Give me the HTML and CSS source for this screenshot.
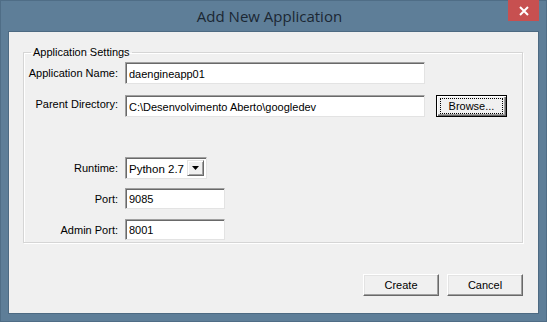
FILE: index.html
```html
<!DOCTYPE html>
<html lang="en">
<head>
<meta charset="UTF-8">
<title>Add New Application</title>
<link rel="stylesheet" href="styles.css">
</head>
<body>
<div class="window">
  <div class="titlebar">
    <span class="title">Add New Application</span>
    <button class="close" type="button">
      <svg width="10" height="10" viewBox="0 0 10 10"><path d="M1 1L9 9M9 1L1 9" stroke="#fff" stroke-width="2"/></svg>
    </button>
  </div>
  <div class="client">
    <fieldset class="group">
      <legend>Application Settings</legend>
      <div class="row row-name">
        <label>Application Name:</label>
        <input class="field wide" type="text" value="daengineapp01">
      </div>
      <div class="row row-dir">
        <label class="up">Parent Directory:</label>
        <input class="field wide" type="text" value="C:\Desenvolvimento Aberto\googledev">
        <button class="btn default" type="button"><span class="focus">Browse...</span></button>
      </div>
      <div class="row row-runtime">
        <label>Runtime:</label>
        <div class="combo">
          <span class="combo-text">Python 2.7</span>
          <span class="combo-btn"><svg width="7" height="4" viewBox="0 0 7 4"><path d="M0 0H7L3.5 4Z" fill="#000"/></svg></span>
        </div>
      </div>
      <div class="row row-port">
        <label>Port:</label>
        <input class="field short" type="text" value="9085">
      </div>
      <div class="row row-admin">
        <label>Admin Port:</label>
        <input class="field short" type="text" value="8001">
      </div>
    </fieldset>
    <div class="actions">
      <button class="btn" type="button">Create</button>
      <button class="btn" type="button">Cancel</button>
    </div>
  </div>
</div>
</body>
</html>
```

FILE: styles.css
```css
body {
  margin: 0;
  padding: 0;
  font-family: "Liberation Sans", Arial, sans-serif;
  font-size: 11px;
  color: #000;
}

.window {
  width: 547px;
  height: 322px;
  background-color: #5e7e98;
  box-sizing: border-box;
  border: 1px solid #4f6d86;
}

.titlebar {
  position: relative;
  height: 30px;
  text-align: center;
}

.title {
  display: inline-block;
  margin-top: 5px;
  margin-right: 8px;
  font-family: "Open Sans", "Noto Sans", sans-serif;
  font-size: 15px;
  color: #1b2733;
}

.close {
  position: absolute;
  top: -1px;
  right: 7px;
  width: 31px;
  height: 21px;
  padding: 0;
  border: none;
  background-color: #c75050;
  display: flex;
  align-items: center;
  justify-content: center;
}

.client {
  margin: 0 7px;
  width: 531px;
  height: 283px;
  box-sizing: border-box;
  background-color: #f0f0f0;
  border: 1px solid #4d6a82;
  padding: 14px 0 0 14px;
}

.group {
  width: 500px;
  height: 197px;
  box-sizing: border-box;
  margin: 0;
  padding: 0;
  border: 1px solid #d5d5d5;
  box-shadow: inset 1px 1px 0 #fff, 1px 1px 0 #fff;
}

.group legend {
  margin-left: 7px;
  padding: 0 2px;
  line-height: 13px;
}

.row {
  display: flex;
  align-items: center;
  height: 22px;
}

.row label {
  width: 94px;
  text-align: right;
  margin-right: 7px;
}

.row label.up {
  margin-bottom: 5px;
}

.row-name { margin-top: 3px; }
.row-dir { margin-top: 11px; }
.row-runtime { margin-top: 40px; }
.row-port { margin-top: 9px; height: 21px; }
.row-admin { margin-top: 10px; height: 21px; }

.field {
  height: 100%;
  box-sizing: border-box;
  margin: 0;
  padding: 1px 3px 0;
  font-family: "Liberation Sans", Arial, sans-serif;
  font-size: 11px;
  color: #000;
  background-color: #fff;
  border: 1px solid #a0a0a0;
  border-right-color: #e3e3e3;
  border-bottom-color: #e3e3e3;
  box-shadow: inset 1px 1px 0 #696969;
  outline: none;
}

.wide { width: 300px; }
.short { width: 100px; }

.btn {
  height: 22px;
  width: 76px;
  padding: 0;
  margin: 0;
  box-sizing: border-box;
  font-family: "Liberation Sans", Arial, sans-serif;
  font-size: 11px;
  color: #000;
  background-color: #f0f0f0;
  border: 1px solid;
  border-color: #fff #696969 #696969 #fff;
  box-shadow: inset -1px -1px 0 #a0a0a0, inset 1px 1px 0 #e3e3e3;
}

.btn.default {
  width: 71px;
  margin-left: 11px;
  border: 1px solid #000;
  box-shadow: inset 1px 1px 0 #fff, inset -1px -1px 0 #696969, inset -2px -2px 0 #a0a0a0;
  display: flex;
  align-items: center;
  justify-content: center;
}

.focus {
  display: block;
  width: 61px;
  height: 14px;
  line-height: 14px;
  border: 1px dotted #000;
}

.combo {
  display: flex;
  align-items: center;
  width: 82px;
  height: 22px;
  box-sizing: border-box;
  background-color: #fff;
  border: 1px solid #a0a0a0;
  border-right-color: #e3e3e3;
  border-bottom-color: #e3e3e3;
  box-shadow: inset 1px 1px 0 #696969;
  padding: 2px 2px 2px 3px;
}

.combo-text {
  flex: 1;
  min-width: 0;
  white-space: nowrap;
  overflow: hidden;
  font-size: 11.5px;
  line-height: 16px;
  padding-top: 2px;
}

.combo-btn {
  flex: none;
  width: 17px;
  height: 16px;
  box-sizing: border-box;
  display: flex;
  align-items: center;
  justify-content: center;
  background-color: #f0f0f0;
  border: 1px solid;
  border-color: #e3e3e3 #696969 #696969 #e3e3e3;
  box-shadow: inset 1px 1px 0 #fff, inset -1px -1px 0 #a0a0a0;
}

.actions {
  display: flex;
  justify-content: flex-end;
  gap: 8px;
  margin-top: 31px;
  margin-right: 15px;
}
```
